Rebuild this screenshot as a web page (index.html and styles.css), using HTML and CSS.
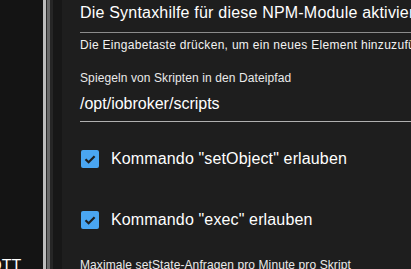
FILE: index.html
```html
<!DOCTYPE html>
<html lang="de">
<head>
  <meta charset="UTF-8" />
  <meta name="viewport" content="width=device-width, initial-scale=1.0"/>
  <title>Javascript-Adapter Einstellungen</title>
  <link rel="stylesheet" href="styles.css">
</head>
<body>
  <div class="layout">
    <nav class="sidebar">
      <div class="nav-item">MQTT</div>
    </nav>
    <div class="splitter">
      <span class="grip-light"></span>
      <span class="grip-gap"></span>
      <span class="grip-mid"></span>
      <span class="grip-dark"></span>
    </div>
    <div class="gutter"></div>

    <main class="settings">
      <div class="field title-field">Die Syntaxhilfe für diese NPM-Module aktivieren</div>
      <div class="helper">Die Eingabetaste drücken, um ein neues Element hinzuzufügen</div>

      <label class="field-label">Spiegeln von Skripten in den Dateipfad</label>
      <div class="text-input">/opt/iobroker/scripts</div>

      <div class="check-row first">
        <svg class="checkbox" width="18" height="18" viewBox="0 0 18 18">
          <rect x="0" y="0" width="18" height="18" rx="2" fill="#4aa6f2"/>
          <path d="M4.5 9.2 L7.6 12.2 L13.6 6.2" fill="none" stroke="#1e1e1e" stroke-width="2.2"/>
        </svg>
        <span>Kommando "setObject" erlauben</span>
      </div>

      <div class="check-row second">
        <svg class="checkbox" width="18" height="18" viewBox="0 0 18 18">
          <rect x="0" y="0" width="18" height="18" rx="2" fill="#4aa6f2"/>
          <path d="M4.5 9.2 L7.6 12.2 L13.6 6.2" fill="none" stroke="#1e1e1e" stroke-width="2.2"/>
        </svg>
        <span>Kommando "exec" erlauben</span>
      </div>

      <label class="field-label last">Maximale setState-Anfragen pro Minute pro Skript</label>
    </main>
  </div>
</body>
</html>
```

FILE: styles.css
```css
body {
  font-family: 'Liberation Sans', Arial, sans-serif;
  background-color: #1e1e1e;
  color: #fff;
  margin: 0;
  padding: 0;
  overflow: hidden;
}
.layout {
  display: flex;
  height: 269px;
}
.sidebar {
  width: 43px;
  background-color: #141414;
  display: flex;
  flex-direction: column;
  justify-content: flex-end;
  overflow: hidden;
}
.nav-item {
  margin-left: -24px;
  margin-bottom: -6px;
  font-size: 16px;
  line-height: 18px;
  white-space: nowrap;
}
.splitter {
  display: flex;
}
.grip-light {
  width: 3px;
  background-color: #bdbdbd;
}
.grip-gap {
  width: 1px;
  background-color: #2a2a2a;
}
.grip-mid {
  width: 3px;
  background-color: #6a6a6a;
}
.grip-dark {
  width: 3px;
  background-color: #262626;
}
.gutter {
  width: 9px;
  background-color: #171717;
}
.settings {
  flex: 1;
  padding-left: 18px;
  overflow: hidden;
  white-space: nowrap;
}
.title-field {
  font-size: 16px;
  line-height: 18px;
  letter-spacing: 0.2px;
  padding-top: 4px;
  padding-bottom: 10px;
  border-bottom: 1px solid #8c8c8c;
}
.helper {
  font-size: 12px;
  line-height: 14px;
  letter-spacing: 0.3px;
  margin-top: 5px;
  color: #f2f2f2;
}
.field-label {
  display: block;
  font-size: 12px;
  line-height: 14px;
  letter-spacing: 0.1px;
  margin-top: 19px;
  color: #eaeaea;
}
.field-label.last {
  margin-top: 29px;
}
.text-input {
  font-size: 16px;
  line-height: 20px;
  margin-top: 9px;
  padding-bottom: 7px;
  border-bottom: 1px solid #b0b0b0;
}
.check-row {
  display: flex;
  align-items: center;
  gap: 12px;
  padding-left: 1px;
  height: 18px;
  font-size: 16px;
  letter-spacing: 0.14px;
}
.check-row.first {
  margin-top: 28px;
}
.check-row.second {
  margin-top: 43px;
}
.checkbox {
  flex-shrink: 0;
}
```
